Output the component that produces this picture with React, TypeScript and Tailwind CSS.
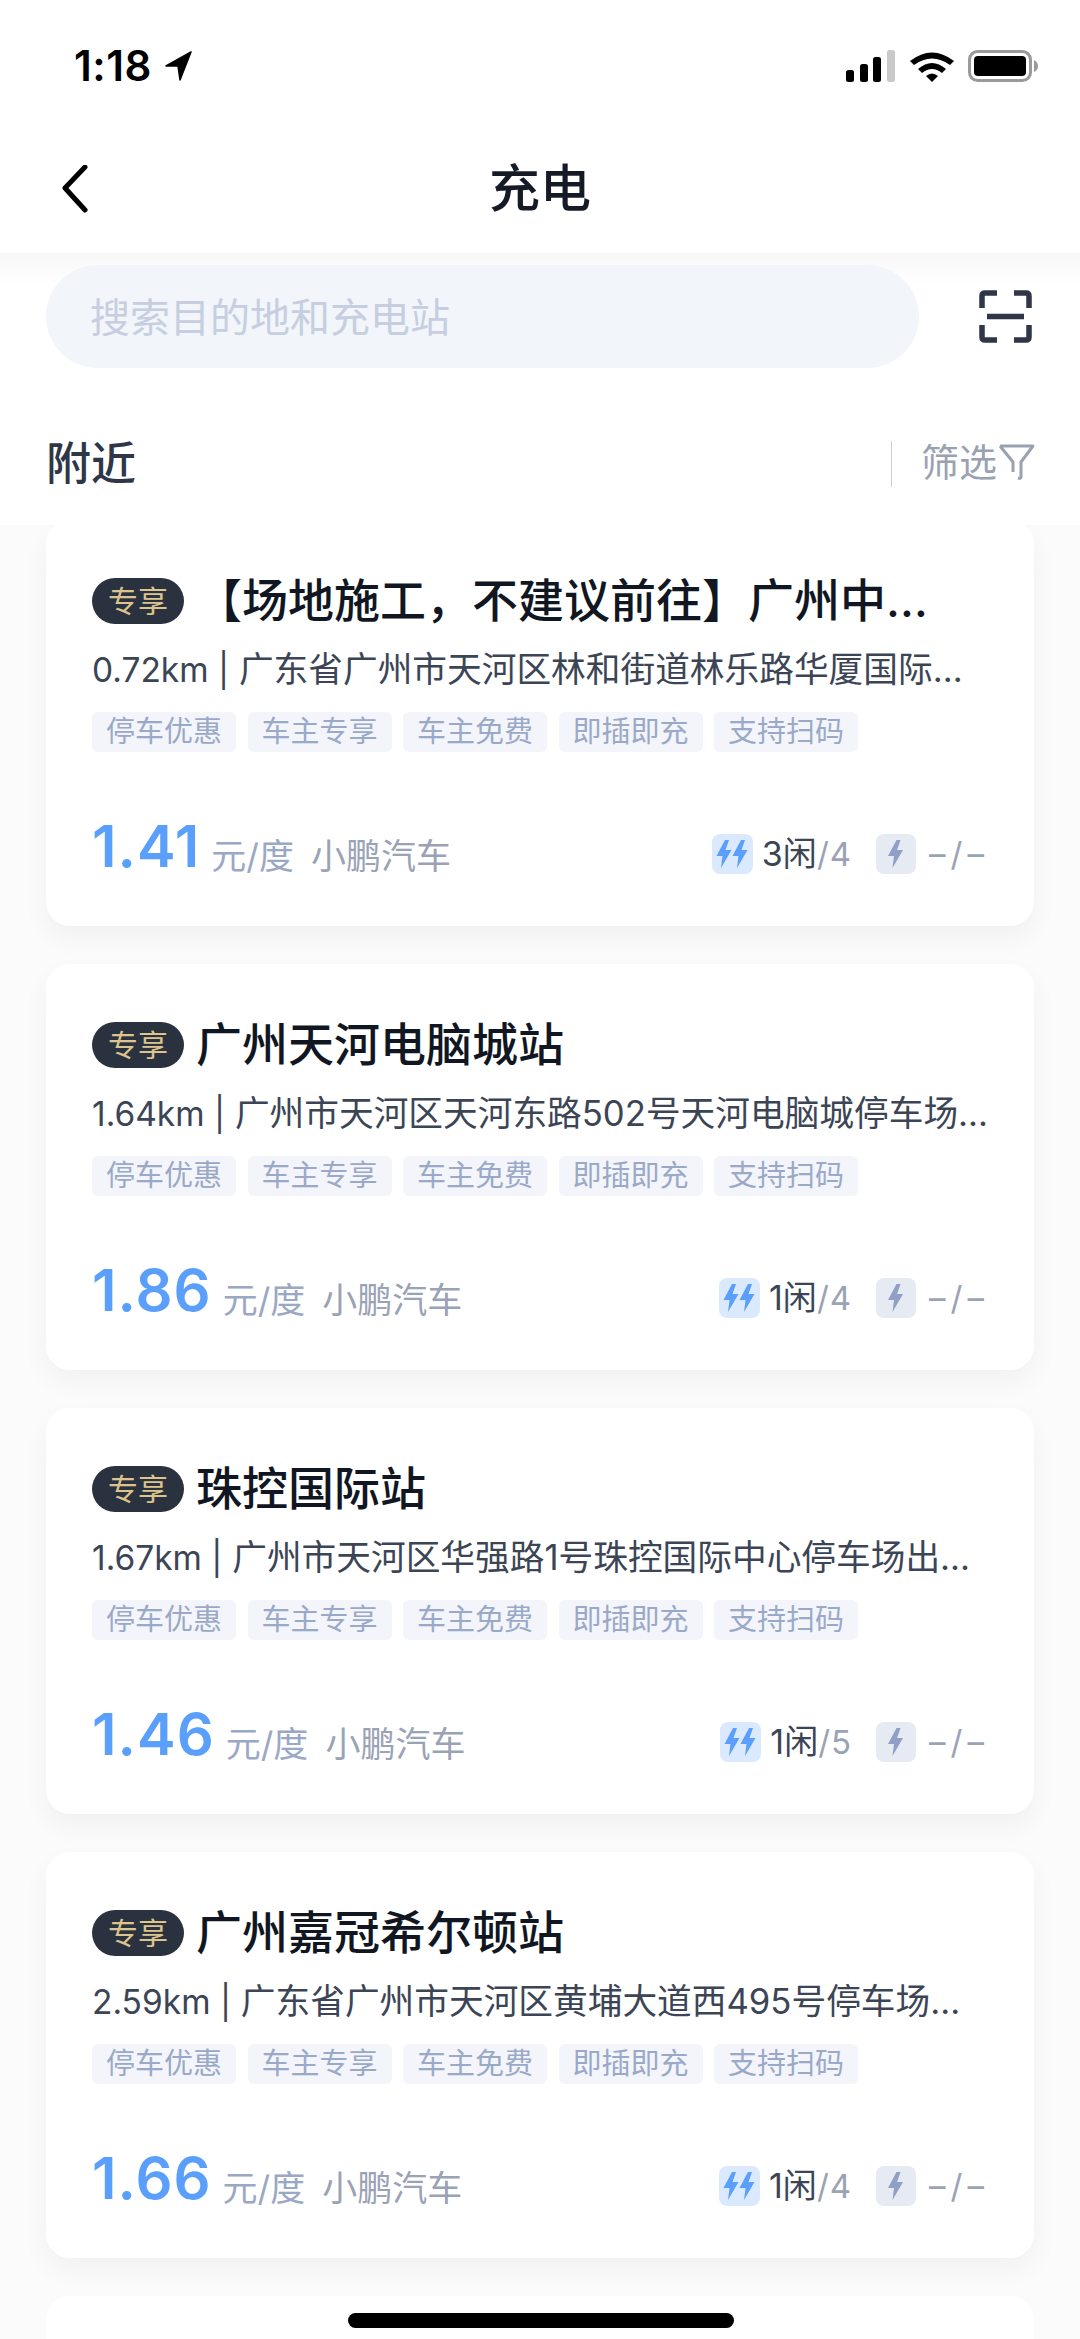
const stations = [
  { title: '【场地施工，不建议前往】广州中…', dist: '0.72km |', address: '广东省广州市天河区林和街道林乐路华厦国际…', price: '1.41', free: '3闲', total: '/4' },
  { title: '广州天河电脑城站', dist: '1.64km |', address: '广州市天河区天河东路502号天河电脑城停车场…', price: '1.86', free: '1闲', total: '/4' },
  { title: '珠控国际站', dist: '1.67km |', address: '广州市天河区华强路1号珠控国际中心停车场出…', price: '1.46', free: '1闲', total: '/5' },
  { title: '广州嘉冠希尔顿站', dist: '2.59km |', address: '广东省广州市天河区黄埔大道西495号停车场…', price: '1.66', free: '1闲', total: '/4' },
];

const tags = ['停车优惠', '车主专享', '车主免费', '即插即充', '支持扫码'];

const Bolt = ({ x, fill }: { x: number; fill: string }) => (
  <path d={`M${x + 9} 6 L${x + 0.5} 22 H${x + 6.5} L${x + 5} 34 L${x + 15.5} 16 H${x + 9.5} L${x + 13} 6 Z`} fill={fill} />
);

const StatusBar = () => (
  <div className="flex h-[125px] items-start justify-between bg-white pt-[48px] pl-[74px] pr-[41px]">
    <div className="flex items-center gap-[13px]">
      <span className="text-[42px] leading-[36px] font-semibold tracking-[0.5px] text-black">1:18</span>
      <svg width="27" height="30" viewBox="0 0 27 30">
        <path d="M26 1 L1 15 H13 L15 29 Z" fill="#000" strokeLinejoin="round" stroke="#000" strokeWidth="1.5" />
      </svg>
    </div>
    <div className="flex items-center gap-[13px] pt-[2px]">
      <svg width="50" height="32" viewBox="0 0 50 32">
        <rect x="0" y="20" width="8" height="12" rx="2.5" fill="#000" />
        <rect x="14" y="14" width="8" height="18" rx="2.5" fill="#000" />
        <rect x="27" y="7" width="8" height="25" rx="2.5" fill="#000" />
        <rect x="41" y="0" width="8" height="32" rx="2.5" fill="#c9c9c9" />
      </svg>
      <svg width="46" height="32" viewBox="0 0 46 32">
        <path d="M1 11 Q23 -6 45 11 L41 15 Q23 2 5 15 Z" fill="#000" />
        <path d="M9 19 Q23 7 37 19 L33 23 Q23 15 13 23 Z" fill="#000" />
        <path d="M17 26 Q23 21 29 26 L23 32 Z" fill="#000" />
      </svg>
      <svg width="71" height="32" viewBox="0 0 71 32">
        <rect x="1.5" y="1.5" width="61" height="29" rx="8" fill="none" stroke="#9a9a9a" strokeWidth="3" />
        <rect x="6" y="6" width="52" height="20" rx="4" fill="#000" />
        <path d="M66 10 Q70 12 70 16 Q70 20 66 22 Z" fill="#9a9a9a" />
      </svg>
    </div>
  </div>
);

const NavBar = () => (
  <div className="relative flex h-[128px] items-start justify-center bg-white pt-[36px]">
    <svg className="absolute top-[40px] left-[60px]" width="30" height="48" viewBox="0 0 30 48" fill="none">
      <path d="M25 2 L5 23 L25 45" stroke="#000" strokeWidth="5" strokeLinecap="round" strokeLinejoin="round" />
    </svg>
    <span className="text-[51px] leading-[56px] font-medium text-[#141a26]">充电</span>
  </div>
);

const SearchSection = () => (
  <div className="relative z-10 h-[272px] bg-[linear-gradient(to_bottom,#f8f8f8,#ffffff_32px)] pt-[12px]">
    <div className="flex items-center pl-[46px] pr-[48px]">
      <div className="flex h-[103px] w-[873px] items-center rounded-full bg-[#f2f5fa] pl-[44px] pt-[2px] text-[40px] text-[#c6cedf]">
        搜索目的地和充电站
      </div>
      <svg className="ml-auto" width="53" height="53" viewBox="0 0 53 53" fill="none" stroke="#2e3647" strokeWidth="5.5">
        <path d="M18 3 H6 Q3 3 3 6 V18" />
        <path d="M35 3 H47 Q50 3 50 6 V18" />
        <path d="M18 50 H6 Q3 50 3 47 V35" />
        <path d="M35 50 H47 Q50 50 50 47 V35" />
        <path d="M8 26.5 H45" />
      </svg>
    </div>
    <div className="mt-[70px] flex items-center pl-[46px] pr-[45px]">
      <span className="text-[45px] leading-[52px] font-medium text-[#2e3647]">附近</span>
      <div className="ml-auto h-[46px] w-px bg-[#c9d0dc]" />
      <span className="ml-[29px] pb-[4px] text-[38px] leading-[46px] text-[#9aa2b2]">筛选</span>
      <svg className="mb-[4px] ml-[1px]" width="37" height="38" viewBox="0 0 37 38" fill="none" stroke="#9aa2b2" strokeWidth="3" strokeLinejoin="round">
        <path d="M2 3 H35 L23 19 V34 Q23 36 20 35" />
        <path d="M2 3 L15 19 V29" />
      </svg>
    </div>
  </div>
);

const StationCard = ({ s }: { s: (typeof stations)[number] }) => (
  <div className="h-[406px] shrink-0 rounded-[24px] bg-white pt-[58px] pl-[46px] pr-[45px] shadow-[0_12px_28px_rgba(0,0,0,0.045)]">
    <div className="flex h-[46px] items-center">
      <span className="flex h-[46px] w-[92px] shrink-0 items-center justify-center rounded-full bg-[#2a3240] text-[30px] text-[#dcc48c]">
        专享
      </span>
      <span className="ml-[12px] -translate-y-px whitespace-nowrap text-[46px] leading-[54px] font-medium text-[#111722]">
        {s.title}
      </span>
    </div>
    <div className="mt-[23px] whitespace-nowrap text-[34.7px] leading-[44px] text-[#3c4555]">
      <span className="text-[33.5px]">{s.dist}</span> {s.address}
    </div>
    <div className="mt-[20px] flex gap-[11.5px]">
      {tags.map(t => (
        <span key={t} className="flex h-[40px] w-[144px] items-center justify-center rounded-[6px] bg-[#f3f5fa] text-[29px] text-[#9aa9c8]">
          {t}
        </span>
      ))}
    </div>
    <div className="mt-[59px] flex h-[70px] items-center">
      <span className="text-[58px] leading-[70px] font-semibold tracking-[1px] text-[#5a9ffc]">{s.price}</span>
      <span className="ml-[11px] pt-[20px] text-[35px] leading-[44px] text-[#9aa8c5]">元/度</span>
      <span className="ml-[17px] pt-[20px] text-[35px] leading-[44px] text-[#9aa3b5]">小鹏汽车</span>
      <div className="ml-auto flex items-center pt-[16px]">
        <span className="h-[40px] w-[41px] rounded-[8px] bg-[#dbe9ff]">
          <svg width="41" height="40" viewBox="0 0 41 40">
            <Bolt x={4} fill="#5a9ffc" />
            <Bolt x={20} fill="#5a9ffc" />
          </svg>
        </span>
        <span className="ml-[9px] text-[34px] leading-[40px] text-[#3c4555]">{s.free}</span>
        <span className="text-[33px] leading-[40px] tracking-[1px] text-[#9aa3b5]">{s.total}</span>
        <span className="ml-[24px] h-[40px] w-[40px] rounded-[8px] bg-[#e6eaf3]">
          <svg width="40" height="40" viewBox="0 0 40 40">
            <Bolt x={11.5} fill="#8f9fc6" />
          </svg>
        </span>
        <span className="ml-[13px] text-[33px] leading-[40px] tracking-[5px] text-[#9aa3b5]">–/–</span>
      </div>
    </div>
  </div>
);

export default function App() {
  return (
    <div className="relative h-[2339px] w-[1080px] overflow-hidden bg-[#fbfbfb] font-['Inter','Noto_Sans_CJK_SC',sans-serif]">
      <StatusBar />
      <NavBar />
      <SearchSection />
      <div className="-mt-[5px] flex flex-col gap-[38px] px-[46px]">
        {stations.map(s => (
          <StationCard key={s.title} s={s} />
        ))}
        <div className="h-[200px] shrink-0 rounded-[24px] bg-white" />
      </div>
      <div className="absolute bottom-[11px] left-[348px] h-[15px] w-[386px] rounded-full bg-black" />
    </div>
  );
}
